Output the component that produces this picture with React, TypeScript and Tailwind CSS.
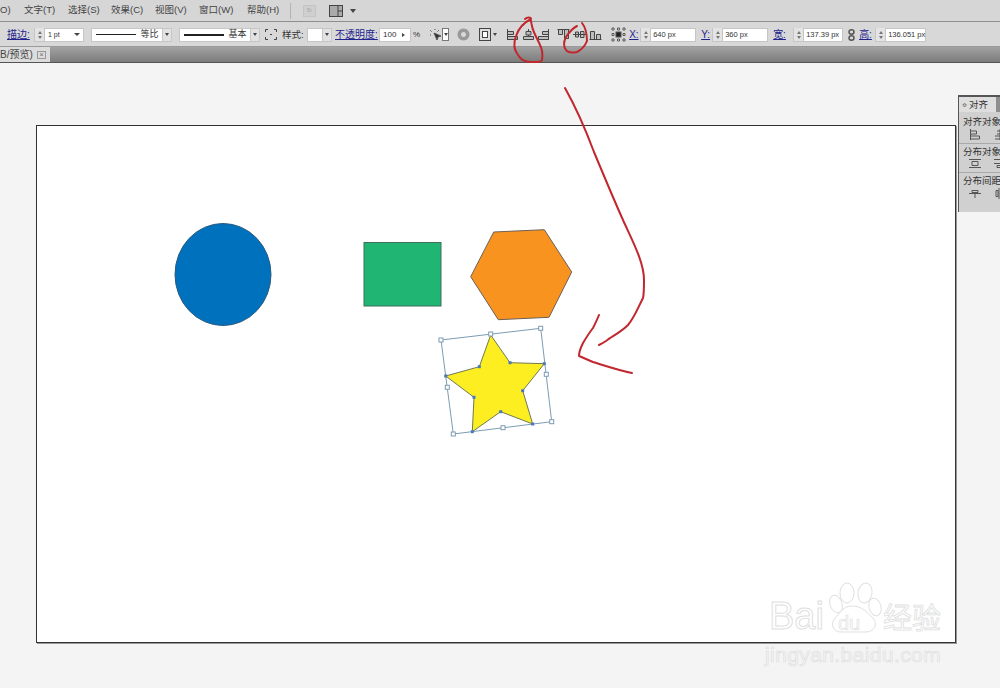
const menuItems = [
  { label: '文字(T)', width: 'w-[44px]' },
  { label: '选择(S)', width: 'w-[43px]' },
  { label: '效果(C)', width: 'w-[44px]' },
  { label: '视图(V)', width: 'w-[44px]' },
  { label: '窗口(W)', width: 'w-[48px]' },
  { label: '帮助(H)', width: 'w-[43px]' },
]

const cjk = "font-['Liberation_Sans','Noto_Sans_CJK_SC',sans-serif]"

function Spinner() {
  return (
    <span className="flex h-[13px] w-[10px] shrink-0 flex-col items-center justify-center gap-[2px] border-r border-[#c4c4c4] bg-[#e4e4e4]">
      <span className="h-0 w-0 border-x-[2.5px] border-b-[3px] border-x-transparent border-b-[#777]" />
      <span className="h-0 w-0 border-x-[2.5px] border-t-[3px] border-x-transparent border-t-[#777]" />
    </span>
  )
}

function Caret({ className = '' }: { className?: string }) {
  return <span className={`h-0 w-0 border-x-[2.5px] border-t-[3px] border-x-transparent border-t-[#444] ${className}`} />
}

function NumField({ value, width, ml }: { value: string; width: string; ml: string }) {
  return (
    <div className={`flex h-[14px] shrink-0 items-center border border-[#c6c6c6] bg-white ${width} ${ml}`}>
      <Spinner />
      <span className="ml-[2px] text-[7.5px] leading-none whitespace-nowrap text-[#333]">{value}</span>
    </div>
  )
}

function StrokeSelect({ label, thick, ml }: { label: string; thick: boolean; ml: string }) {
  return (
    <div className={`flex h-[14px] w-[81px] items-center border border-[#c6c6c6] bg-white pl-[4px] ${ml}`}>
      <span className={`w-[41px] bg-[#222] ${thick ? 'h-[2px]' : 'h-px'}`} />
      <span className="ml-[4px] w-[22px] text-[9px] leading-none whitespace-nowrap text-[#333]">{label}</span>
      <span className="flex h-full w-[9px] items-center justify-center border-l border-[#c6c6c6] bg-[#e2e2e2]">
        <Caret />
      </span>
    </div>
  )
}

function AlignIcon({ d, ml }: { d: string; ml: string }) {
  return (
    <svg className={`h-[13px] w-[13px] shrink-0 ${ml}`} viewBox="0 0 13 13" fill="#bdbdbd" stroke="#444" strokeWidth="1">
      <path d={d} />
    </svg>
  )
}

function BlueLabel({ children, ml, w }: { children: string; ml: string; w?: string }) {
  return (
    <span className={`shrink-0 text-[10px] leading-none whitespace-nowrap text-[#23238e] underline ${ml} ${w ?? ''}`}>
      {children}
    </span>
  )
}

function PanelIcons({ first, second }: { first: string; second: string }) {
  return (
    <div className="mt-[2px] ml-[10px] flex gap-[13px]">
      <svg className="h-[11px] w-[12px] shrink-0" viewBox="0 0 12 11" fill="none" stroke="#555">
        <path d={first} />
      </svg>
      <svg className="h-[11px] w-[12px] shrink-0" viewBox="0 0 12 11" fill="none" stroke="#555">
        <path d={second} />
      </svg>
    </div>
  )
}

export default function App() {
  return (
    <div className={`relative flex h-screen w-full flex-col overflow-hidden bg-[#f4f4f4] ${cjk}`}>
      {/* Menu bar */}
      <div className="flex h-[21px] shrink-0 items-center bg-[#d6d6d6] text-[9.5px] text-[#444]">
        <span className="w-[24px] shrink-0">O)</span>
        {menuItems.map((m) => (
          <span key={m.label} className={`shrink-0 whitespace-nowrap ${m.width}`}>
            {m.label}
          </span>
        ))}
        <span className="h-[16px] w-px bg-[#b4b4b4]" />
        <span className="ml-[12px] flex h-[12px] w-[13px] items-center justify-center border border-[#c4c4c4] bg-[#cfcfcf] text-[5px] text-[#aaa]">
          Br
        </span>
        <svg className="ml-[13px] h-[12px] w-[14px]" viewBox="0 0 14 12" fill="#aaa" stroke="#444">
          <rect x="0.5" y="0.5" width="13" height="11" />
          <path d="M9 1v10M9 6h4" fill="none" />
        </svg>
        <Caret className="ml-[7px] border-x-[3px] border-t-[4px] border-t-[#222]" />
      </div>

      {/* Options bar */}
      <div className="flex h-[25px] shrink-0 items-center border-t border-[#8f8f8f] bg-[#d8d8d8] pt-[1px] text-[#333]">
        <BlueLabel ml="ml-[7px]" w="w-[27px]">描边:</BlueLabel>
        <div className="flex h-[14px] w-[50px] items-center border border-[#c6c6c6] bg-white">
          <Spinner />
          <span className="ml-[3px] w-[26px] text-[7px] leading-none">1 pt</span>
          <Caret className="border-x-[3px] border-t-[3px] border-t-[#222]" />
        </div>
        <StrokeSelect label="等比" thick={false} ml="ml-[7px]" />
        <StrokeSelect label="基本" thick ml="ml-[7px]" />
        <svg className="ml-[5px] h-[11px] w-[12px]" viewBox="0 0 12 11" fill="none" stroke="#444">
          <path d="M.5 3V.5H3M9 .5h2.500V3M.5 8v2.500H3M9 10.500h2.500V8" />
          <path d="M5 5.500h2" />
        </svg>
        <span className="ml-[5px] w-[25px] text-[9.5px] leading-none whitespace-nowrap">样式:</span>
        <div className="flex h-[14px] w-[25px] border border-[#c6c6c6] bg-white">
          <span className="w-[15px]" />
          <span className="flex w-[9px] items-center justify-center border-l border-[#c6c6c6] bg-[#e2e2e2]">
            <Caret />
          </span>
        </div>
        <BlueLabel ml="ml-[3px]" w="w-[44px]">不透明度:</BlueLabel>
        <div className="flex h-[14px] w-[32px] items-center border border-[#c6c6c6] bg-white pl-[3px] text-[8px]">
          <span className="w-[19px] leading-none">100</span>
          <span className="h-0 w-0 border-y-[2.5px] border-l-[3px] border-y-transparent border-l-[#444]" />
        </div>
        <span className="ml-[2px] text-[8px] leading-none">%</span>
        <svg className="ml-[9px] h-[14px] w-[13px]" viewBox="0 0 13 14" fill="none" stroke="#555">
          <path d="M1 2l2 2M6 1v2M10 2L8 4M1 7h2" strokeDasharray="1 1" />
          <path d="M5 5l3 7 1-3 3-1z" fill="#333" />
        </svg>
        <span className="flex h-[13px] w-[7px] items-center justify-center border border-[#777] bg-white">
          <Caret className="border-x-2" />
        </span>
        <svg className="ml-[8px] h-[13px] w-[13px]" viewBox="0 0 13 13" fill="#999">
          <path d="M6.500 0.500a6 6 0 1 0 .01 0zM6.500 4a2.500 2.500 0 1 1-.01 0z" />
        </svg>
        <svg className="ml-[9px] h-[13px] w-[12px]" viewBox="0 0 12 13" fill="#ddd" stroke="#444">
          <rect x="0.500" y="0.500" width="11" height="12" />
          <rect x="3.500" y="3.500" width="5" height="6" fill="#fff" />
        </svg>
        <Caret className="ml-[2px] border-x-[2.5px] border-t-[3px] border-t-[#222]" />
        <AlignIcon ml="ml-[9px]" d="M1.500 1v11M1.500 3.500h6v3h-6zM1.500 8.500h10v3h-10z" />
        <AlignIcon ml="ml-[3px]" d="M6.500 1v3M6.500 7v1M4 3.500h5v3.500H4zM1.500 8.500h10v3h-10z" />
        <AlignIcon ml="ml-[2px]" d="M11.500 1v11M11.500 3.500h-6v3h6zM11.500 8.500h-10v3h10z" />
        <AlignIcon ml="ml-[7px]" d="M0.500 1.500h12M1.500 1.500h4v5h-4zM7.500 1.500h4v9h-4z" />
        <AlignIcon ml="ml-[3px]" d="M0 6.500h13M2.500 4h3v5h-3zM7.500 3.500h3.500v6H7.500z" />
        <AlignIcon ml="ml-[3px]" d="M0.500 11.500h12M1.500 3.500h4v8h-4zM7.500 6.500h4v5h-4z" />
        <svg className="ml-[9px] h-[15px] w-[15px] shrink-0" viewBox="0 0 15 15" fill="#fff" stroke="#555">
          <rect x="5" y="5" width="5" height="5" fill="#222" />
          <path d="M1 1h2v2H1zM6.500 1h2v2h-2zM12 1h2v2h-2zM1 6.500h2v2H1zM12 6.500h2v2h-2zM1 12h2v2H1zM6.500 12h2v2h-2zM12 12h2v2h-2z" />
        </svg>
        <BlueLabel ml="ml-[3px]" w="w-[11px]">X:</BlueLabel>
        <NumField value="640 px" width="w-[56px]" ml="" />
        <BlueLabel ml="ml-[5px]" w="w-[11px]">Y:</BlueLabel>
        <NumField value="360 px" width="w-[56px]" ml="" />
        <BlueLabel ml="ml-[5px]" w="w-[20px]">宽:</BlueLabel>
        <NumField value="137.39 px" width="w-[50px]" ml="" />
        <svg className="ml-[5px] h-[12px] w-[7px] shrink-0" viewBox="0 0 7 12" fill="none" stroke="#555" strokeWidth="1.500">
          <ellipse cx="3.500" cy="3" rx="2.500" ry="2.200" />
          <ellipse cx="3.500" cy="9" rx="2.500" ry="2.200" />
        </svg>
        <BlueLabel ml="ml-[4px]" w="w-[16px]">高:</BlueLabel>
        <NumField value="136.051 px" width="w-[51px]" ml="" />
      </div>

      {/* Document tab strip */}
      <div className="flex h-[16px] shrink-0 border-t border-[#9a9a9a] bg-gradient-to-b from-[#a2a2a2] to-[#7c7c7c]">
        <div className="flex h-full w-[50px] items-center bg-[#dcdcdc] text-[10px] whitespace-nowrap text-[#444]">
          <span className="w-[33px] overflow-hidden">B/预览)</span>
          <span className="ml-[4px] flex h-[8px] w-[9px] items-center justify-center border border-[#999] text-[7px] leading-none text-[#666]">
            ×
          </span>
        </div>
      </div>
      <div className="h-px shrink-0 bg-[#555]" />

      {/* Canvas */}
      <div className="min-h-0 flex-1 pt-[62px] pl-[36px]">
        <div className="h-[518px] w-[920px] border border-[#333] bg-white shadow-[1px_1px_0_#999]">
          <svg className="h-full w-full" viewBox="37 126 918 516">
            <ellipse cx="223" cy="274.500" rx="48" ry="51" fill="#0071bc" stroke="#2a5a80" />
            <rect x="364" y="242.500" width="77" height="63.500" fill="#21b573" stroke="#3f6f5c" />
            <path d="M493.700 232L544.300 229.700L571.700 272L549 317.300L498.300 319.700L470.700 276.700Z" fill="#f7931e" stroke="#6d6158" />
            <path
              d="M490.700 335L510 362.700L544.300 363.700L522.700 390.700L532.700 424L500.700 411.700L472.300 431.700L474 397.300L445.700 376L479.300 366.700Z"
              fill="#fcee21"
              stroke="#6f7a50"
            />
            <path d="M441 340L540.700 328.300L551.700 421.700L453.300 434Z" fill="none" stroke="#7c9cb4" />
            {[
              [441, 340],
              [490.700, 334],
              [540.700, 328.300],
              [546.300, 374.300],
              [551.700, 421.700],
              [503, 427.700],
              [453.300, 434],
              [447.300, 387.300],
            ].map(([x, y]) => (
              <rect key={`${x}-${y}`} x={x - 2} y={y - 2} width="4" height="4" fill="#fff" stroke="#7c9cb4" />
            ))}
            {[
              [510, 362.700],
              [544.300, 363.700],
              [522.700, 390.700],
              [532.700, 424],
              [500.700, 411.700],
              [472.300, 431.700],
              [474, 397.300],
              [445.700, 376],
              [479.300, 366.700],
            ].map(([x, y]) => (
              <rect key={`${x}-${y}`} x={x - 1.500} y={y - 1.500} width="3" height="3" fill="#4a78b8" />
            ))}
          </svg>
        </div>
      </div>

      {/* Align panel */}
      <div className="absolute top-[95px] left-[958px] h-[117px] w-[60px] border-t-2 border-l border-[#555] bg-[#d0d0d0] text-[9.5px] leading-none whitespace-nowrap text-[#333]">
        <div className="flex h-[15px] bg-[#bdbdbd]">
          <div className="flex w-[37px] items-center bg-[#dedede] pl-[3px]">
            <span className="mr-[2px] text-[6px]">≎</span>对齐
          </div>
          <div className="w-[12px] bg-[#8e8e8e]" />
        </div>
        <div className="pt-[5px] pl-[4px]">对齐对象:</div>
        <PanelIcons first="M1.500 0v11M1.500 2h6v3h-6M1.500 7h9v3h-9" second="M6 0v11M3 2h6v3H3M1 7h10v3H1" />
        <div className="mt-[3px] border-t border-[#a8a8a8] pt-[3px] pl-[4px]">分布对象:</div>
        <PanelIcons first="M0 1.500h12M0 9.500h12M3 3.500h6v4H3z" second="M0 1.500h12M0 5.500h12M3 7.500h6v2H3z" />
        <div className="mt-[3px] border-t border-[#a8a8a8] pt-[3px] pl-[4px]">分布间距:</div>
        <PanelIcons first="M0 5.500h12M3 2.500h6v2H3zM6 6v4" second="M5 0v11M2 2.500h2v6H2zM7 2.500h2v6H7z" />
      </div>

      {/* Hand drawn annotations */}
      <svg className="pointer-events-none absolute inset-0 h-full w-full" viewBox="0 0 1000 688" fill="none" stroke="#c1272d" strokeWidth="2" strokeLinecap="round" strokeLinejoin="round">
        <path d="M525 19C527 17 531 17 531 19C523 23 518 30 516 36C513 44 514 50 518 55C521 60 524 62 530 62C535 62 541 63 542 60C543 54 542 49 540 45C537 38 533 32 532 26C531 22 531 20 530 18" />
        <path d="M582 23C586 28 587 34 587 41C585 46 581 50 577 52C572 53 568 53 566 50C563 46 564 41 566 37C570 31 573 28 577 26" />
        <path d="M565 88C574 104 585 128 594 152C604 176 614 200 623 220C632 240 644 262 644 280C644 290 644 294 643 298C637 310 634 318 628 325C620 333 612 336 606 341C603 343 601 344 599 345" />
        <path d="M599 315C597 320 595 324 593 328C589 333 586 338 583 343C581 347 579 352 579 356C584 358 588 360 593 362C606 366 618 370 632 373" />
      </svg>

      {/* Watermark */}
      <div className="pointer-events-none absolute top-[580px] left-[765px] h-[90px] w-[190px]">
        <span className="absolute top-[14px] left-[4px] font-['Liberation_Sans',sans-serif] text-[38px] leading-[44px] text-transparent [-webkit-text-stroke:1px_#e0e0e0]">
          Bai
        </span>
        <svg className="absolute top-0 left-0 h-[64px] w-[125px]" viewBox="0 0 125 64" fill="#fff" stroke="#e0e0e0">
          <ellipse cx="82" cy="13" rx="7" ry="10" />
          <ellipse cx="100" cy="13" rx="7" ry="10" transform="rotate(10 100 13)" />
          <ellipse cx="71" cy="24" rx="6" ry="9" transform="rotate(-20 71 24)" />
          <ellipse cx="110" cy="27" rx="6" ry="9" transform="rotate(-15 110 27)" />
          <path d="M87 26C78 26 75 33 70 38C65 44 68 52 76 52H100C110 52 113 44 108 38C102 33 98 26 87 26Z" />
        </svg>
        <span className="absolute top-[32px] left-[73px] font-['Liberation_Sans',sans-serif] text-[20px] leading-[22px] text-transparent [-webkit-text-stroke:0.7px_#e0e0e0]">
          du
        </span>
        <span className="absolute top-[21px] left-[118px] text-[29px] leading-[36px] whitespace-nowrap text-transparent [-webkit-text-stroke:0.8px_#e0e0e0]">
          经验
        </span>
        <span className="absolute top-[62px] left-0 font-['Liberation_Sans',sans-serif] text-[21px] leading-[26px] tracking-[0.4px] whitespace-nowrap text-transparent [-webkit-text-stroke:0.7px_#e0e0e0]">
          jingyan.baidu.com
        </span>
      </div>
    </div>
  )
}
